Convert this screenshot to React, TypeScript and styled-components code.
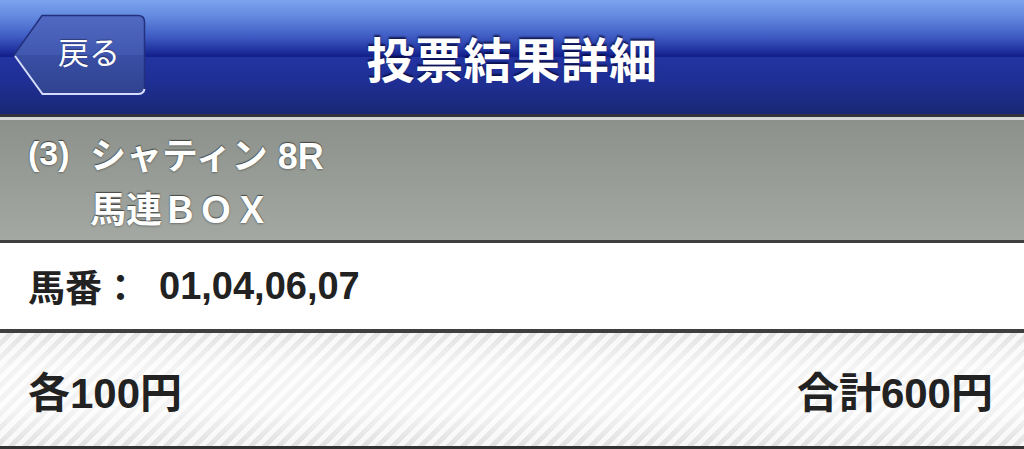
import styled, { createGlobalStyle } from 'styled-components';

const GlobalStyle = createGlobalStyle`
  html, body {
    margin: 0;
    padding: 0;
    background: #fff;
    overflow: hidden;
  }
  body {
    font-family: "Liberation Sans", "Noto Sans CJK JP", sans-serif;
  }
`;

const Page = styled.div`
  width: 1024px;
  height: 449px;
  display: flex;
  flex-direction: column;
`;

const NavBar = styled.header`
  height: 114px;
  display: grid;
  grid-template-columns: 1fr auto 1fr;
  align-items: center;
  background: linear-gradient(
    to bottom,
    #7ca4ee 0%,
    #6188de 15%,
    #3f5cc4 32%,
    #1e2f9c 45%,
    #111e88 49.5%,
    #2334a2 50%,
    #1f2f96 70%,
    #1a2874 100%
  );
  border-bottom: 3px solid #34343c;
`;

const BackButton = styled.button`
  position: relative;
  justify-self: start;
  margin: 0 0 4px 12px;
  width: 134px;
  height: 82px;
  padding: 0 0 10px 20px;
  border: none;
  background: transparent;
  color: #fff;
  font-family: "Noto Sans CJK JP", sans-serif;
  font-size: 31px;
  font-weight: 400;
  cursor: pointer;

  svg {
    position: absolute;
    left: 0;
    top: 0;
  }

  span {
    position: relative;
    text-shadow: 0 -1px 1px rgba(0, 0, 0, 0.35);
  }
`;

const Title = styled.h1`
  margin: 0;
  color: #fff;
  font-family: "Noto Sans CJK JP", sans-serif;
  font-size: 48px;
  font-weight: 700;
  letter-spacing: 0.5px;
  text-shadow: 0 -2px 2px rgba(0, 0, 40, 0.7);
`;

const RaceBox = styled.section`
  height: 120px;
  display: grid;
  grid-template-columns: 62px 1fr;
  align-content: center;
  padding-left: 28px;
  border-top: 3px solid #d6d8d6;
  border-bottom: 3px solid #3e3f3e;
  background: linear-gradient(to bottom, #8c918b, #a3a8a3);
  color: #fff;
  font-size: 36px;
  font-weight: 700;
  line-height: 50px;
  text-shadow: 0 -1px 1px rgba(0, 0, 0, 0.55), 0 1px 2px rgba(0, 0, 0, 0.3);
`;

const RaceNo = styled.div`
  font-size: 34px;
`;

const RaceLines = styled.div`
  display: flex;
  flex-direction: column;
`;

const NumbersRow = styled.div`
  height: 86px;
  display: flex;
  align-items: center;
  padding-left: 28px;
  background: #fff;
  border-bottom: 4px solid #3f3f3f;
  color: #222;
  font-size: 37px;
  font-weight: 700;
`;

const Label = styled.span`
  font-family: "Noto Sans CJK JP", sans-serif;
`;

const Numbers = styled.span`
  margin-left: 20px;
  font-size: 38px;
`;

const TotalRow = styled.div`
  height: 113px;
  display: flex;
  align-items: center;
  justify-content: space-between;
  padding: 0 31px 0 28px;
  border-bottom: 3px solid #333;
  background:
    repeating-linear-gradient(
      135deg,
      rgba(255, 255, 255, 0.7) 0 5px,
      rgba(0, 0, 0, 0.02) 5px 10px
    ),
    linear-gradient(to bottom, #e8e8e8, #f8f8f8 30%, #f8f8f8 70%, #e6e6e6);
  color: #222;
  font-size: 42px;
  font-weight: 700;
`;

const BackShape = () => (
  <svg width="134" height="82" viewBox="0 0 134 82">
    <defs>
      <linearGradient id="btnFill" x1="0" y1="0" x2="0" y2="1">
        <stop offset="0" stopColor="#5169c2" />
        <stop offset="0.5" stopColor="#4158b0" />
        <stop offset="0.5" stopColor="#3a4fa4" />
        <stop offset="1" stopColor="#30428f" />
      </linearGradient>
    </defs>
    <path
      d="M2 41 L30 1.5 H126 Q132.5 1.5 132.5 8 V74 Q132.5 80.5 126 80.5 H30 Z"
      fill="url(#btnFill)"
      stroke="#22307e"
      strokeWidth="1.5"
    />
    <path
      d="M3 42 L30.5 80 H126 Q131.5 80 132.5 75"
      fill="none"
      stroke="#d4dcff"
      strokeWidth="2"
    />
  </svg>
);

export default function App() {
  return (
    <Page>
      <GlobalStyle />
      <NavBar>
        <BackButton>
          <BackShape />
          <span>戻る</span>
        </BackButton>
        <Title>投票結果詳細</Title>
        <div />
      </NavBar>
      <RaceBox>
        <RaceNo>(3)</RaceNo>
        <RaceLines>
          <div>
            <Label>シャティン</Label> 8R
          </div>
          <Label>馬連ＢＯＸ</Label>
        </RaceLines>
      </RaceBox>
      <NumbersRow>
        <Label>馬番：</Label>
        <Numbers>01,04,06,07</Numbers>
      </NumbersRow>
      <TotalRow>
        <span>
          <Label>各</Label>100<Label>円</Label>
        </span>
        <span>
          <Label>合計</Label>600<Label>円</Label>
        </span>
      </TotalRow>
    </Page>
  );
}
